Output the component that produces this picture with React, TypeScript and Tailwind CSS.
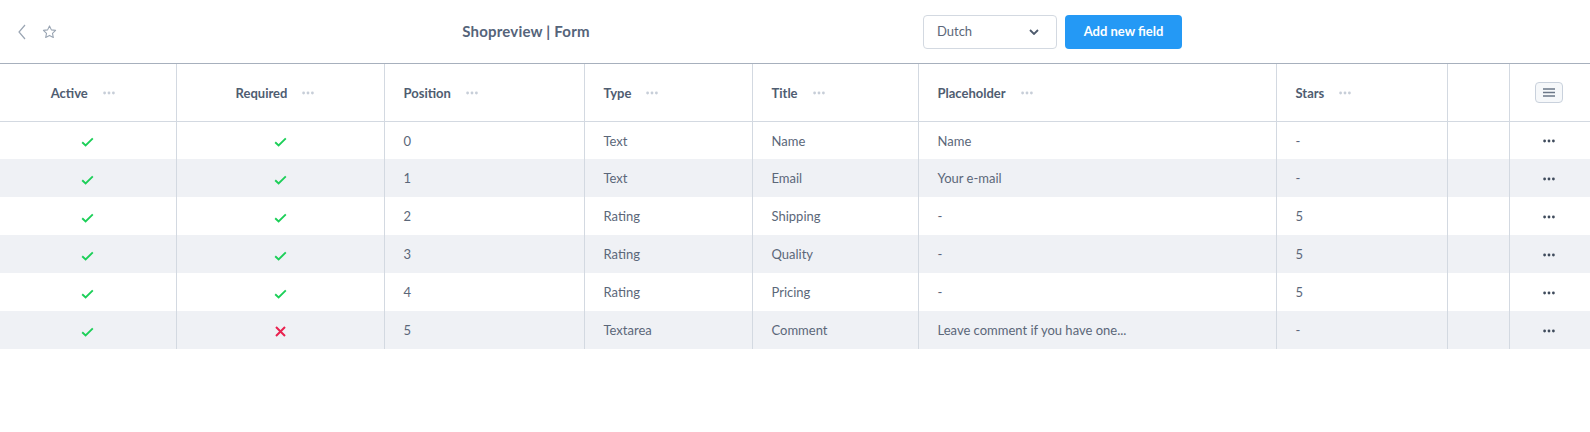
import React from "react";

const cols = [
  { key: "active", label: "Active", w: 176, center: true },
  { key: "required", label: "Required", w: 208, center: true },
  { key: "position", label: "Position", w: 200 },
  { key: "type", label: "Type", w: 168 },
  { key: "title", label: "Title", w: 166 },
  { key: "placeholder", label: "Placeholder", w: 358 },
  { key: "stars", label: "Stars", w: 171 },
];

const rows = [
  { active: true, required: true, position: "0", type: "Text", title: "Name", placeholder: "Name", stars: "-" },
  { active: true, required: true, position: "1", type: "Text", title: "Email", placeholder: "Your e-mail", stars: "-" },
  { active: true, required: true, position: "2", type: "Rating", title: "Shipping", placeholder: "-", stars: "5" },
  { active: true, required: true, position: "3", type: "Rating", title: "Quality", placeholder: "-", stars: "5" },
  { active: true, required: true, position: "4", type: "Rating", title: "Pricing", placeholder: "-", stars: "5" },
  { active: true, required: false, position: "5", type: "Textarea", title: "Comment", placeholder: "Leave comment if you have one...", stars: "-" },
];

function Dots({ className }: { className?: string }) {
  return (
    <svg width="12" height="4" viewBox="0 0 12 4" className={className}>
      <circle cx="1.6" cy="2" r="1.4" fill="currentColor" />
      <circle cx="6" cy="2" r="1.4" fill="currentColor" />
      <circle cx="10.4" cy="2" r="1.4" fill="currentColor" />
    </svg>
  );
}

function Check() {
  return (
    <svg width="13" height="10" viewBox="0 0 13 10" className="text-[#1ccf58]">
      <path d="M1.2 5.2 L4.6 8.4 L11.8 1.4" fill="none" stroke="currentColor" strokeWidth="1.9" />
    </svg>
  );
}

function Cross() {
  return (
    <svg width="11" height="11" viewBox="0 0 11 11" className="text-[#e9224f]">
      <path d="M1 1 L10 10 M10 1 L1 10" fill="none" stroke="currentColor" strokeWidth="2" />
    </svg>
  );
}

export default function App() {
  return (
    <div className="w-[1590px] h-[432px] bg-white text-[13px] text-[#5b6779]" style={{ fontFamily: "Lato, 'Open Sans', sans-serif" }}>
      {/* Top bar */}
      <div className="h-[64px] flex items-center border-b border-[#a7b0bd]">
        <div className="w-[200px] flex items-center gap-[16px] pl-[18px]">
          <svg width="8" height="16" viewBox="0 0 8 16" className="text-[#9aa5b3]">
            <path d="M7 1 L1 8 L7 15" fill="none" stroke="currentColor" strokeWidth="1.2" />
          </svg>
          <svg width="15" height="14" viewBox="0 0 24 23" className="text-[#9aa5b3]">
            <path
              d="M12 1.5 L15.1 8 L22 8.8 L16.9 13.6 L18.3 20.6 L12 17.1 L5.7 20.6 L7.1 13.6 L2 8.8 L8.9 8 Z"
              fill="none"
              stroke="currentColor"
              strokeWidth="1.8"
              strokeLinejoin="round"
            />
          </svg>
        </div>
        <div className="w-[652px] text-center text-[15px] font-bold tracking-[0.2px] text-[#55647a]">Shopreview | Form</div>
        <div className="ml-[71px] flex items-center gap-[8px]">
          <div className="w-[134px] h-[34px] border border-[#d3d9e1] rounded-[4px] flex items-center justify-between pl-[13px] pr-[17px] text-[#5b6779]">
            <span>Dutch</span>
            <svg width="10" height="6" viewBox="0 0 10 6" className="text-[#4d5a6c]">
              <path d="M1 1 L5 5 L9 1" fill="none" stroke="currentColor" strokeWidth="1.8" />
            </svg>
          </div>
          <button className="w-[117px] h-[34px] rounded-[4px] bg-[#2499f5] text-white font-bold">Add new field</button>
        </div>
      </div>

      {/* Table */}
      <table className="table-fixed border-collapse w-[1590px]">
        <colgroup>
          {cols.map((c) => (
            <col key={c.key} style={{ width: c.w }} />
          ))}
          <col style={{ width: 62 }} />
          <col style={{ width: 81 }} />
        </colgroup>
        <thead>
          <tr className="h-[57px] border-b border-[#d3d9e1]">
            {cols.map((c) => (
              <th
                key={c.key}
                className={`border-r border-[#d3d9e1] font-bold text-[#4f5d71] pt-[2px] ${c.center ? "text-center pr-[10px]" : "text-left pl-[19px]"}`}
              >
                <span className="inline-flex items-center gap-[15px]">
                  {c.label}
                  <Dots className="text-[#c7ced8]" />
                </span>
              </th>
            ))}
            <th className="border-r border-[#d3d9e1]"></th>
            <th>
              <div className="flex justify-center pr-[2px]">
                <div className="w-[28px] h-[21px] rounded-[4px] border border-[#c9d1dc] bg-[#f6f8fa] flex items-center justify-center">
                  <svg width="12" height="9" viewBox="0 0 12 9" className="text-[#6b7788]">
                    <path d="M0 1 H12 M0 4.5 H12 M0 8 H12" stroke="currentColor" strokeWidth="1.3" />
                  </svg>
                </div>
              </div>
            </th>
          </tr>
        </thead>
        <tbody>
          {rows.map((r, i) => (
            <tr key={i} className={`h-[38px] ${i % 2 === 1 ? "bg-[#eff1f5]" : "bg-white"}`}>
              <td className="border-r border-[#d3d9e1]">
                <div className="flex justify-center pt-[3px]">{r.active ? <Check /> : <Cross />}</div>
              </td>
              <td className="border-r border-[#d3d9e1]">
                <div className="flex justify-center pt-[3px]">{r.required ? <Check /> : <Cross />}</div>
              </td>
              <td className="border-r border-[#d3d9e1] pl-[19px] pt-[2px]">{r.position}</td>
              <td className="border-r border-[#d3d9e1] pl-[19px] pt-[2px]">{r.type}</td>
              <td className="border-r border-[#d3d9e1] pl-[19px] pt-[2px]">{r.title}</td>
              <td className="border-r border-[#d3d9e1] pl-[19px] pt-[2px]">{r.placeholder}</td>
              <td className="border-r border-[#d3d9e1] pl-[19px] pt-[2px]">{r.stars}</td>
              <td className="border-r border-[#d3d9e1]"></td>
              <td>
                <div className="flex justify-center pr-[2px] pt-[2px]">
                  <Dots className="text-[#3f4b5c]" />
                </div>
              </td>
            </tr>
          ))}
        </tbody>
      </table>
    </div>
  );
}
